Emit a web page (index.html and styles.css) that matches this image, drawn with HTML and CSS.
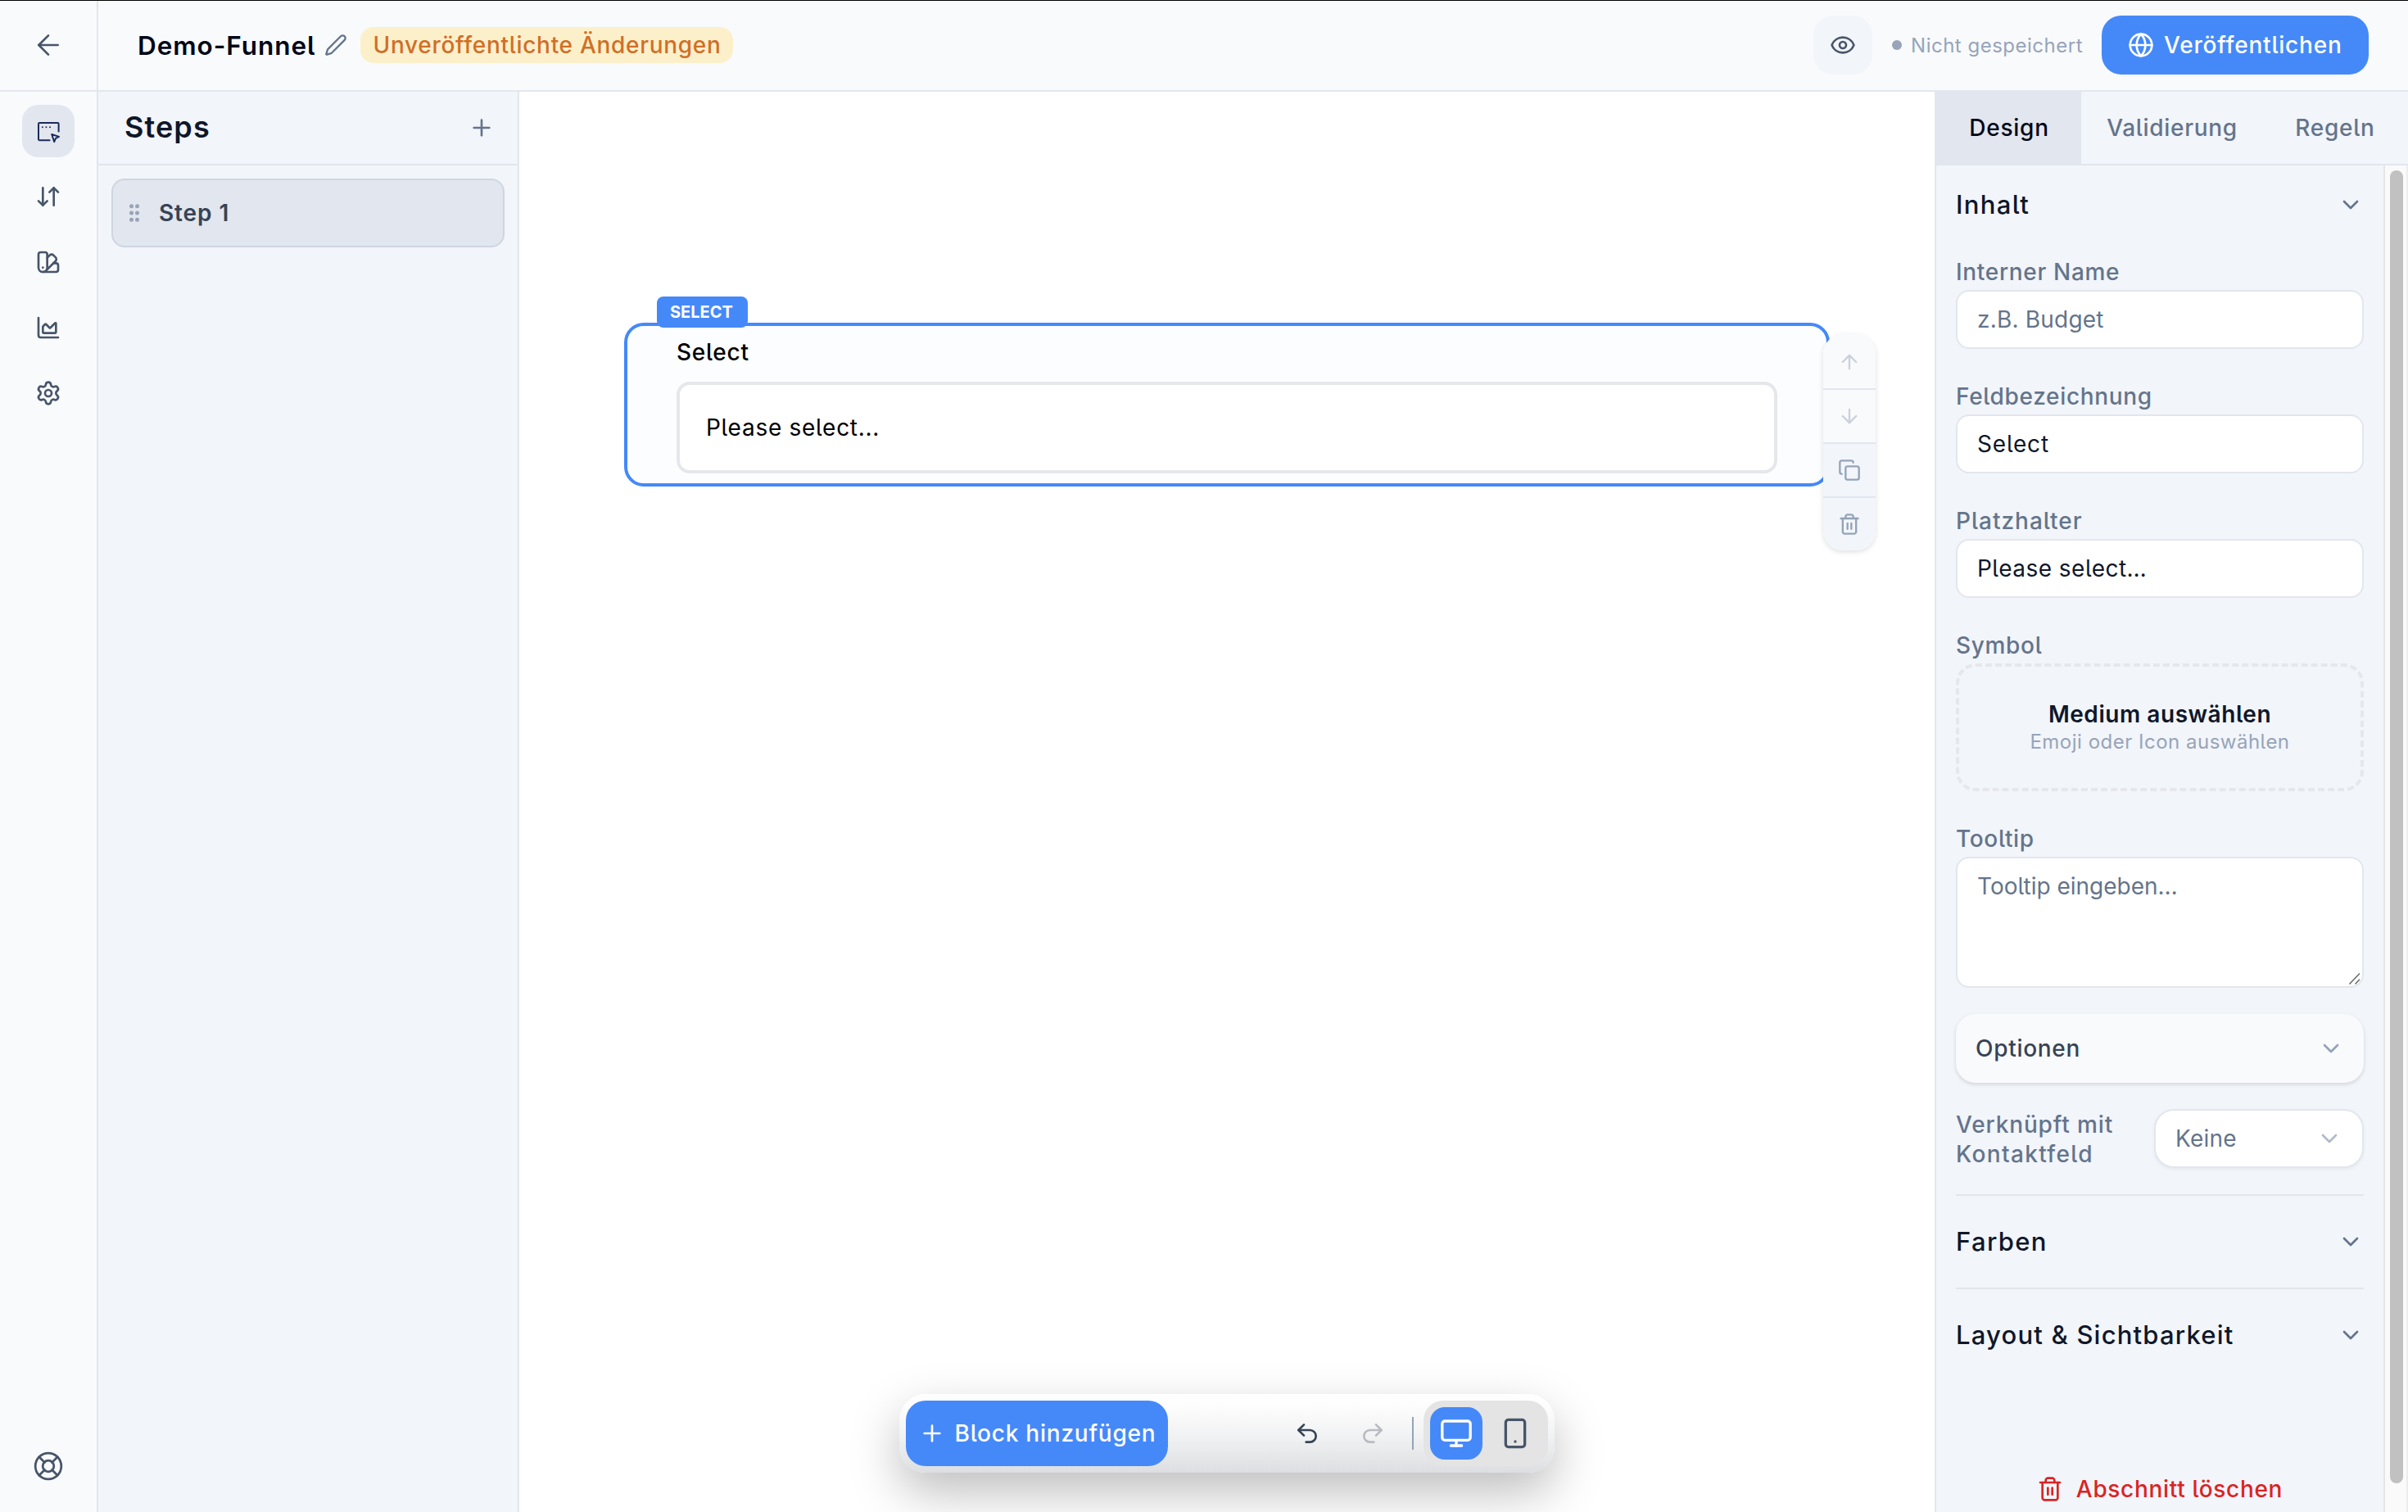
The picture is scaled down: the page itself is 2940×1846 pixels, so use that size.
FILE: index.html
```html
<!DOCTYPE html>
<html lang="de">
<head>
<meta charset="utf-8">
<title>Demo-Funnel</title>
<link rel="stylesheet" href="styles.css">
</head>
<body>
<div class="app">
  <header class="topbar">
    <div class="back"><svg class="icon i40 thin" viewBox="0 0 24 24"><path d="m12 19-7-7 7-7"/><path d="M19 12H5"/></svg></div>
    <div class="title-group">
      <h1 class="funnel-name">Demo-Funnel</h1>
      <svg class="icon i28 pencil" viewBox="0 0 24 24"><path d="M21.174 6.812a1 1 0 0 0-3.986-3.987L3.842 16.174a2 2 0 0 0-.5.83l-1.321 4.352a.5.5 0 0 0 .623.622l4.353-1.32a2 2 0 0 0 .83-.497z"/></svg>
      <span class="badge">Unveröffentlichte Änderungen</span>
    </div>
    <div class="actions">
      <button class="eye"><svg class="icon i32" viewBox="0 0 24 24"><path d="M2.062 12.348a1 1 0 0 1 0-.696 10.75 10.75 0 0 1 19.876 0 1 1 0 0 1 0 .696 10.75 10.75 0 0 1-19.876 0"/><circle cx="12" cy="12" r="3"/></svg></button>
      <span class="status"><i class="dot"></i>Nicht gespeichert</span>
      <button class="publish"><svg class="icon i32" viewBox="0 0 24 24"><circle cx="12" cy="12" r="10"/><path d="M12 2a14.5 14.5 0 0 0 0 20 14.5 14.5 0 0 0 0-20"/><path d="M2 12h20"/></svg>Veröffentlichen</button>
    </div>
  </header>

  <nav class="rail">
    <a class="rail-item active"><svg class="icon i32" viewBox="0 0 32 32"><path d="M28.6 16.5V7.2A1.2 1.2 0 0 0 27.4 6H5.2A1.2 1.2 0 0 0 4 7.2V26a1.2 1.2 0 0 0 1.2 1.2H17.6"/><path d="M20.2 20 29 22.9 25 24.9 23.2 29.2Z"/><path d="M8.8 11.3h.01M13.4 11.3h.01M18 11.3h.01"/></svg></a>
    <a class="rail-item"><svg class="icon i32" viewBox="0 0 24 24"><path d="m3 16 4 4 4-4"/><path d="M7 20V4"/><path d="m21 8-4-4-4 4"/><path d="M17 4v16"/></svg></a>
    <a class="rail-item"><svg class="icon i32" viewBox="0 0 24 24"><path d="M11 17a4 4 0 0 1-8 0V5a2 2 0 0 1 2-2h4a2 2 0 0 1 2 2Z"/><path d="M16.7 13H19a2 2 0 0 1 2 2v4a2 2 0 0 1-2 2H7"/><path d="M7 17h.01"/><path d="m11 8 2.3-2.3a2.4 2.4 0 0 1 3.404.004L18.6 7.6a2.4 2.4 0 0 1 .026 3.434L9.9 19.8"/></svg></a>
    <a class="rail-item"><svg class="icon i32" viewBox="0 0 24 24"><path d="M3 3v16a2 2 0 0 0 2 2h16"/><path d="M7 11.207a.5.5 0 0 1 .146-.353l2-2a.5.5 0 0 1 .708 0l3.292 3.292a.5.5 0 0 0 .708 0l4.292-4.292a.5.5 0 0 1 .854.353V16a1 1 0 0 1-1 1H8a1 1 0 0 1-1-1z"/></svg></a>
    <a class="rail-item"><svg class="icon i32" viewBox="0 0 24 24"><path d="M9.671 4.136a2.34 2.34 0 0 1 4.659 0 2.34 2.34 0 0 0 3.319 1.915 2.34 2.34 0 0 1 2.33 4.033 2.34 2.34 0 0 0 0 3.831 2.34 2.34 0 0 1-2.33 4.033 2.34 2.34 0 0 0-3.319 1.915 2.34 2.34 0 0 1-4.659 0 2.34 2.34 0 0 0-3.32-1.915 2.34 2.34 0 0 1-2.33-4.033 2.34 2.34 0 0 0 0-3.831A2.34 2.34 0 0 1 6.35 6.051a2.34 2.34 0 0 0 3.319-1.915"/><circle cx="12" cy="12" r="3"/></svg></a>
    <a class="rail-item help"><svg class="icon i38" viewBox="0 0 24 24"><circle cx="12" cy="12" r="10"/><path d="m4.93 4.93 4.24 4.24"/><path d="m14.83 9.17 4.24-4.24"/><path d="m14.83 14.83 4.24 4.24"/><path d="m9.17 14.83-4.24 4.24"/><circle cx="12" cy="12" r="4.3"/></svg></a>
  </nav>

  <aside class="steps">
    <div class="steps-head"><h2>Steps</h2><svg class="icon i32" viewBox="0 0 24 24"><path d="M5 12h14"/><path d="M12 5v14"/></svg></div>
    <div class="step">
      <svg class="grip" viewBox="0 0 12 22"><circle cx="2.5" cy="2.7" r="2.5"/><circle cx="9.5" cy="2.7" r="2.5"/><circle cx="2.5" cy="11" r="2.5"/><circle cx="9.5" cy="11" r="2.5"/><circle cx="2.5" cy="19.3" r="2.5"/><circle cx="9.5" cy="19.3" r="2.5"/></svg>
      <span>Step 1</span>
    </div>
  </aside>

  <main class="canvas">
    <section class="block">
      <span class="block-tag">SELECT</span>
      <div class="block-label">Select</div>
      <div class="block-select">Please select...</div>
      <div class="block-tools">
        <button class="off first"><svg class="icon i28" viewBox="0 0 24 24"><path d="m5 12 7-7 7 7"/><path d="M12 19V5"/></svg></button>
        <button class="off"><svg class="icon i28" viewBox="0 0 24 24"><path d="M12 5v14"/><path d="m19 12-7 7-7-7"/></svg></button>
        <button><svg class="icon i28" viewBox="0 0 24 24"><rect width="14" height="14" x="8" y="8" rx="2"/><path d="M4 16c-1.1 0-2-.9-2-2V4c0-1.1.9-2 2-2h10c1.1 0 2 .9 2 2"/></svg></button>
        <button><svg class="icon i28" viewBox="0 0 24 24"><path d="M3 6h18"/><path d="M19 6v14c0 1-1 2-2 2H7c-1 0-2-1-2-2V6"/><path d="M8 6V4c0-1 1-2 2-2h4c1 0 2 1 2 2v2"/><path d="M10 11v6"/><path d="M14 11v6"/></svg></button>
      </div>
    </section>
    <div class="dock">
      <button class="add"><svg class="icon i32" viewBox="0 0 24 24"><path d="M5 12h14"/><path d="M12 5v14"/></svg>Block hinzufügen</button>
      <div class="history">
        <svg class="icon i32 undo" viewBox="0 0 24 24"><path d="M9 14 4 9l5-5"/><path d="M4 9h10.5a5.5 5.5 0 0 1 0 11H11"/></svg>
        <svg class="icon i32 redo" viewBox="0 0 24 24"><path d="m15 14 5-5-5-5"/><path d="M20 9H9.5a5.5 5.5 0 0 0 0 11H13"/></svg>
        <i class="divider"></i>
      </div>
      <div class="devices">
        <span class="device on"><svg class="icon i40" viewBox="0 0 24 24"><rect width="20.6" height="14" x="1.7" y="3" rx="2"/><path d="M8 21h8"/><path d="M12 17v4"/></svg></span>
        <span class="device"><svg class="icon i40" viewBox="0 0 24 24"><rect width="14" height="20" x="5" y="2" rx="2"/><path d="M12 18h.01"/></svg></span>
      </div>
    </div>
  </main>

  <aside class="panel">
    <div class="tabs"><span class="tab on">Design</span><span class="tab wide">Validierung</span><span class="tab">Regeln</span></div>
    <div class="panel-body">
      <div class="props">
        <div class="section-head first"><h3>Inhalt</h3><svg class="icon i32" viewBox="0 0 24 24"><path d="m6 9 6 6 6-6"/></svg></div>
        <div class="fields">
          <div class="field"><label>Interner Name</label><div class="input ph">z.B. Budget</div></div>
          <div class="field"><label>Feldbezeichnung</label><div class="input val-s">Select</div></div>
          <div class="field"><label class="loose">Platzhalter</label><div class="input val-p">Please select…</div></div>
          <div class="field"><label>Symbol</label><div class="dropzone"><b>Medium auswählen</b><span>Emoji oder Icon auswählen</span></div></div>
          <div class="field"><label>Tooltip</label><div class="input area ph">Tooltip eingeben…<svg class="resize" viewBox="0 0 16 16"><path d="M1.5 14.5 14 1.5M8.5 14.5 14 8.8"/></svg></div></div>
        </div>
        <div class="options"><span>Optionen</span><svg class="icon i32" viewBox="0 0 24 24"><path d="m6 9 6 6 6-6"/></svg></div>
        <div class="link-row">
          <span class="link-label">Verknüpft mit<br><span class="looser">Kontaktfeld</span></span>
          <div class="dropdown"><span>Keine</span><svg class="icon i32" viewBox="0 0 24 24"><path d="m6 9 6 6 6-6"/></svg></div>
        </div>
        <div class="section-head line"><h3>Farben</h3><svg class="icon i32" viewBox="0 0 24 24"><path d="m6 9 6 6 6-6"/></svg></div>
        <div class="section-head line"><h3 class="long">Layout &amp; Sichtbarkeit</h3><svg class="icon i32" viewBox="0 0 24 24"><path d="m6 9 6 6 6-6"/></svg></div>
        <button class="delete"><svg class="icon i32" viewBox="0 0 24 24"><path d="M3 6h18"/><path d="M19 6v14c0 1-1 2-2 2H7c-1 0-2-1-2-2V6"/><path d="M8 6V4c0-1 1-2 2-2h4c1 0 2 1 2 2v2"/><path d="M10 11v6"/><path d="M14 11v6"/></svg>Abschnitt löschen</button>
      </div>
      <div class="scrollbar"><i class="thumb"></i></div>
    </div>
  </aside>
</div>
</body>
</html>
```
FILE: styles.css
```css
* { box-sizing: border-box; margin: 0; padding: 0; }

body {
  width: 2940px;
  height: 1846px;
  overflow: hidden;
  font-family: Inter, "Liberation Sans", sans-serif;
  font-size: 28px;
  font-feature-settings: "cv05";
  color: #0f172a;
  background: #fff;
}

button { font: inherit; border: 0; background: none; display: flex; align-items: center; }

.icon {
  display: block;
  flex: none;
  fill: none;
  stroke: currentColor;
  stroke-width: 2;
  stroke-linecap: round;
  stroke-linejoin: round;
}
.i28 { width: 28px; height: 28px; }
.i32 { width: 32px; height: 32px; }
.i38 { width: 38px; height: 38px; stroke-width: 1.75; }
.i40 { width: 40px; height: 40px; }
.thin { stroke-width: 1.6; }

.app {
  height: 1846px;
  display: grid;
  grid-template-columns: 120px 514px 1fr 578px;
  grid-template-rows: 111px 1734px;
  border-top: 1px solid #000;
}

/* Top bar */
.topbar {
  grid-column: 1 / -1;
  display: flex;
  align-items: stretch;
  background: #f9fafc;
  border-bottom: 2px solid #e2e8ee;
}
.back {
  width: 120px;
  padding: 0 1px 1px 0;
  display: flex;
  align-items: center;
  justify-content: center;
  color: #475569;
  border-right: 2px solid #e2e6ee;
}
.title-group { display: flex; align-items: center; padding: 0 0 1px 48px; }
.funnel-name { width: 228px; font-size: 31.5px; font-weight: 600; letter-spacing: .95px; color: #020617; }
.pencil { color: #64748b; }
.badge {
  width: 455px;
  height: 44px;
  line-height: 44px;
  margin-left: 16px;
  padding-left: 15.5px;
  border-radius: 16px;
  white-space: nowrap;
  font-weight: 500;
  letter-spacing: .7px;
  color: #d06f27;
  background: #fcf0cb;
}
.actions { margin-left: auto; padding: 0 48px 1px 0; display: flex; align-items: center; }
.eye { width: 72px; height: 72px; justify-content: center; border-radius: 24px; background: #f2f5fa; color: #475569; }
.status {
  display: flex;
  align-items: center;
  gap: 11px;
  margin: 0 23px 0 24px;
  font-size: 24px;
  letter-spacing: .5px;
  color: #97a4b9;
}
.dot { width: 12px; height: 12px; border-radius: 50%; background: #97a4b9; }
.publish {
  width: 326px;
  height: 72px;
  padding-left: 32px;
  gap: 12px;
  border-radius: 24px;
  background: #4589f9;
  color: #fff;
  font-weight: 500;
  letter-spacing: .8px;
}

/* Icon rail */
.rail {
  display: flex;
  flex-direction: column;
  align-items: center;
  gap: 16px;
  padding: 16px 0 24px;
  background: #f9fafc;
  border-right: 2px solid #e2e6ee;
}
.rail-item {
  width: 64px;
  height: 64px;
  display: flex;
  align-items: center;
  justify-content: center;
  border-radius: 20px;
  color: #475569;
}
.rail-item.active { background: #e2e6ee; color: #1a2b5c; }
.rail-item.help { margin-top: auto; }

/* Steps column */
.steps { background: #f2f5fa; border-right: 2px solid #e2e6ee; }
.steps-head {
  height: 90px;
  display: flex;
  align-items: center;
  justify-content: space-between;
  padding: 0 28px 0 32px;
  border-bottom: 2px solid #e2e6ee;
  color: #64748b;
}
.steps-head h2 { margin-bottom: 2px; font-size: 36px; font-weight: 600; letter-spacing: 1.1px; color: #0f172a; }
.step {
  height: 84px;
  margin: 16px;
  padding-left: 20px;
  display: flex;
  align-items: center;
  gap: 24px;
  border: 2px solid #cdd6e1;
  border-radius: 16px;
  background: #e2e6ee;
  font-weight: 600;
  letter-spacing: .9px;
  color: #374355;
}
.grip { width: 12px; height: 22px; fill: #97a4b9; }

/* Canvas */
.canvas { position: relative; padding: 282px 128px 0; background: #fff; }
.block {
  position: relative;
  height: 200px;
  padding: 14px 60px 0;
  border: 4px solid #4589f9;
  border-radius: 24px;
  background: #fcfdff;
  color: #000;
}
.block-tag {
  position: absolute;
  left: 36px;
  top: -36px;
  width: 111px;
  height: 38px;
  line-height: 38px;
  padding-left: 16px;
  border-radius: 8px;
  background: #4589f9;
  color: #fff;
  font-size: 20px;
  font-weight: 700;
  letter-spacing: 0;
}
.block-label { line-height: 36px; font-size: 28px; font-weight: 500; letter-spacing: .75px; }
.block-select {
  height: 112px;
  line-height: 104px;
  margin-top: 18px;
  padding-left: 32px;
  border: 4px solid #e5e7eb;
  border-radius: 16px;
  background: #fff;
  font-size: 28px;
  letter-spacing: .72px;
}
.block-tools {
  position: absolute;
  left: 1460px;
  top: 10px;
  width: 64px;
  border-radius: 24px;
  overflow: hidden;
  box-shadow: 0 2px 6px rgba(0, 0, 0, .13);
}
.block-tools button {
  width: 64px;
  height: 66px;
  justify-content: center;
  background: #f2f5fa;
  border-top: 2px solid #e2e6ee;
  color: #94a3b8;
}
.block-tools .off { background: #f9fafc; color: #cad1dc; }
.block-tools .first { border-top-color: #f9fafc; }

/* Floating dock */
.dock {
  position: absolute;
  left: 464px;
  bottom: 48px;
  width: 800px;
  height: 96px;
  padding: 0 8px;
  display: flex;
  align-items: center;
  justify-content: space-between;
  border-radius: 32px;
  background: linear-gradient(#fff 0%, #fdfdfd 15%, #f2f3f4 50%, #e6e7e9 80%, #dddee2 100%);
  box-shadow: 0 24px 60px rgba(0, 0, 0, .26);
}
.add {
  width: 320px;
  height: 80px;
  padding-left: 16px;
  gap: 11.5px;
  border-radius: 24px;
  background: #4589f9;
  color: #fff;
  font-weight: 500;
  letter-spacing: .78px;
}
.history { display: flex; align-items: center; margin-left: auto; }
.undo { color: #374355; }
.redo { margin-left: 48px; color: #b8bbc1; }
.divider { width: 2px; height: 40px; margin: 0 12px 0 32px; background: #94a3b8; }
.devices { display: flex; gap: 8px; width: 152px; height: 80px; padding: 8px; border-radius: 24px; background: #e4e4e4; }
.device { width: 64px; height: 64px; display: flex; align-items: center; justify-content: center; border-radius: 18px; color: #475569; }
.device.on { background: #4589f9; color: #fff; }

/* Properties panel */
.panel { background: #f2f5fa; border-left: 2px solid #e2e6ee; display: flex; flex-direction: column; }
.tabs { height: 90px; display: flex; border-bottom: 2px solid #e2e6ee; }
.tab {
  width: 177px;
  padding-left: 1px;
  line-height: 89px;
  text-align: center;
  font-weight: 500;
  letter-spacing: .75px;
  color: #64748b;
}
.tab.wide { width: 221px; letter-spacing: .68px; }
.tab.on { background: #e2e6ee; color: #020617; }
.panel-body { flex: 1; display: flex; }
.props { width: 546px; padding: 0 24px; }
.scrollbar {
  width: 30px;
  padding: 6px 0 0 6px;
  border-left: 2px solid #e5e5e6;
  border-right: 2px solid #ededed;
  background: #fafafa;
}
.thumb { display: block; width: 16px; height: 1603px; border-radius: 8px; background: #c1c1c1; }

.section-head {
  height: 112px;
  display: flex;
  align-items: center;
  justify-content: space-between;
  color: #64748b;
}
.section-head.first { height: 96px; }
.section-head.line { height: 114px; border-top: 2px solid #e2e6ec; }
.section-head h3 { margin-bottom: 2px; font-size: 31px; font-weight: 500; letter-spacing: 1.35px; color: #0f172a; }
.section-head h3.long { letter-spacing: 1.2px; }

.fields { display: flex; flex-direction: column; gap: 39px; padding-top: 15px; }
.field label {
  display: block;
  height: 36px;
  line-height: 38px;
  margin-bottom: 5px;
  font-weight: 500;
  letter-spacing: .68px;
  color: #64748b;
}
.field label.loose { letter-spacing: 1px; }
.input {
  height: 72px;
  line-height: 69px;
  padding-left: 24px;
  border: 2px solid #e2e6ee;
  border-radius: 16px;
  background: #fff;
}
.input.ph { color: #64748b; letter-spacing: .2px; }
.input.val-s { letter-spacing: .8px; }
.input.val-p { letter-spacing: .48px; }
.input.area { position: relative; height: 160px; letter-spacing: 0; }
.resize { position: absolute; right: 1px; bottom: 1px; width: 16px; height: 16px; fill: none; stroke: #666; stroke-width: 1.5; }
.dropzone {
  height: 156px;
  display: flex;
  flex-direction: column;
  align-items: center;
  justify-content: center;
  border: 4px dashed #e5e7eb;
  border-radius: 24px;
}
.dropzone b { line-height: 35px; font-weight: 600; letter-spacing: .55px; }
.dropzone span { line-height: 32px; font-size: 24px; letter-spacing: .5px; color: #97a4b9; }

.options {
  height: 84px;
  margin-top: 32px;
  padding: 0 24px;
  display: flex;
  align-items: center;
  justify-content: space-between;
  border-radius: 24px;
  background: #f9fafc;
  box-shadow: 0 2px 5px rgba(0, 0, 0, .14);
  font-weight: 500;
  letter-spacing: .7px;
  color: #374355;
}
.options .icon { color: #94a3b8; }
.link-row { display: flex; justify-content: space-between; margin: 32px 0; }
.link-label { height: 72px; padding-top: 1px; line-height: 36px; font-weight: 500; letter-spacing: .87px; color: #64748b; }
.looser { letter-spacing: 1.35px; }
.dropdown {
  width: 256px;
  height: 72px;
  padding: 0 24px;
  display: flex;
  align-items: center;
  justify-content: space-between;
  border: 2px solid #e2e6ee;
  border-radius: 24px;
  background: #fff;
  box-shadow: 0 2px 4px rgba(0, 0, 0, .05);
  letter-spacing: .2px;
  color: #64748b;
}
.dropdown .icon { color: #b1bac9; }
.delete {
  margin: 115px auto 0;
  gap: 16px;
  font-weight: 500;
  letter-spacing: .68px;
  color: #d92424;
}
```
